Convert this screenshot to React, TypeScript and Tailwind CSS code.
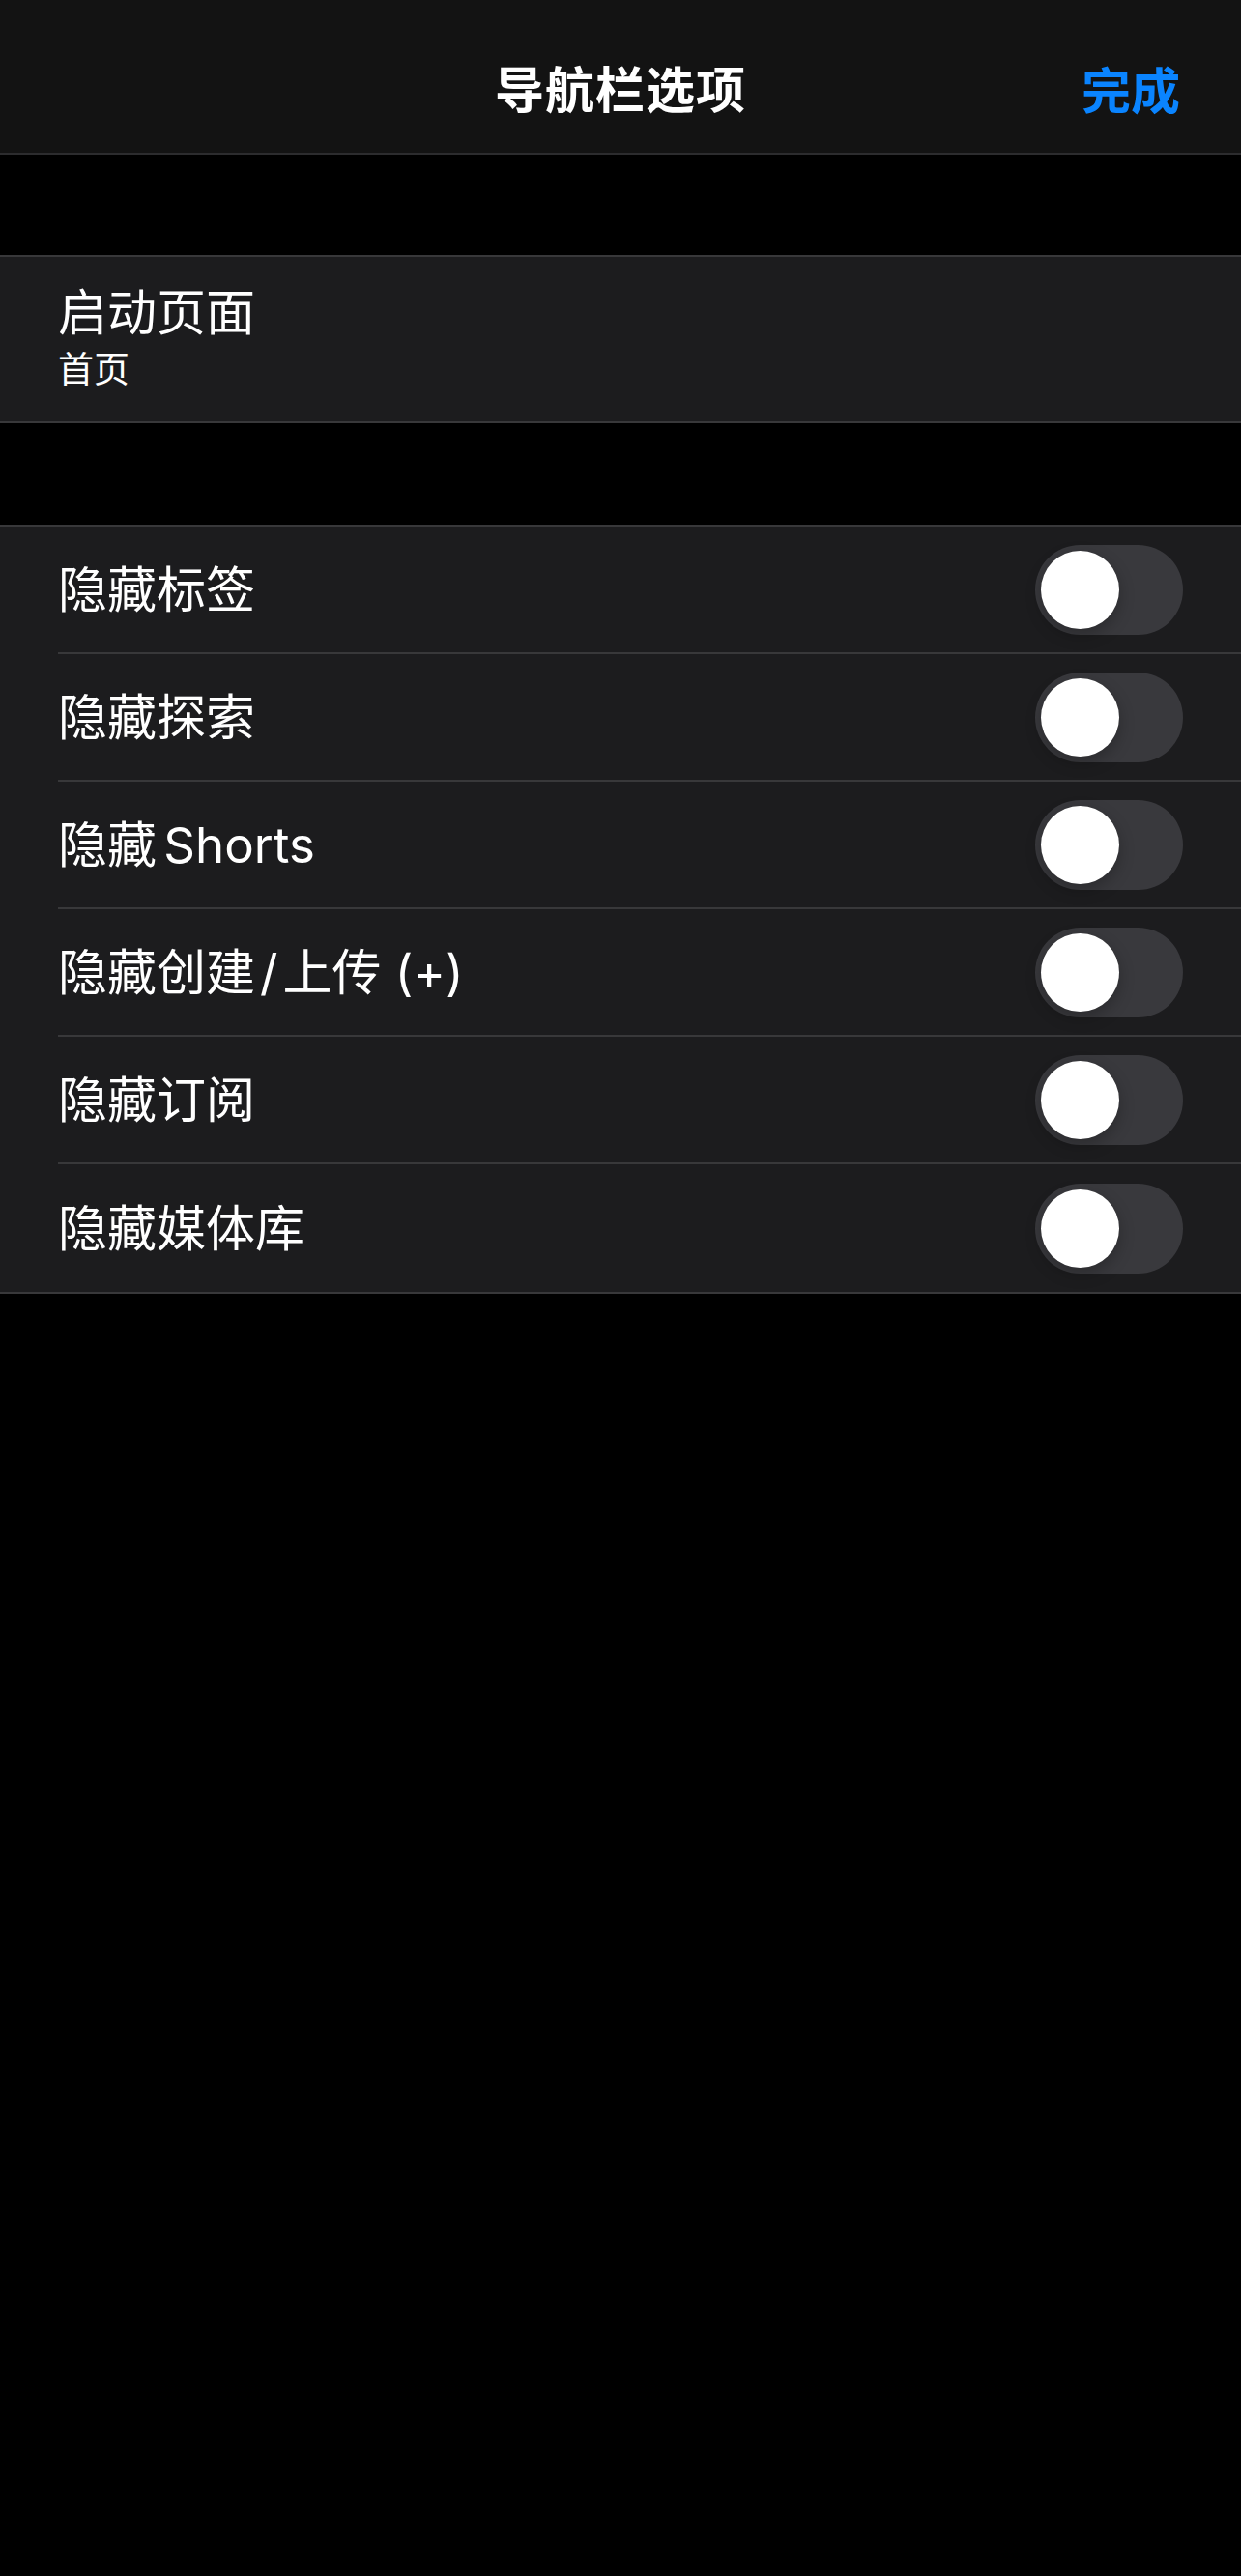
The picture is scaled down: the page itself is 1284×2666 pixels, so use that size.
import React, { useState } from 'react';

const font = "font-['Inter','Noto_Sans_CJK_SC',sans-serif]";

const items: { key: string; label: React.ReactNode }[] = [
  { key: 'tags', label: '隐藏标签' },
  { key: 'explore', label: '隐藏探索' },
  { key: 'shorts', label: <span className="[word-spacing:-7px]">隐藏 Shorts</span> },
  {
    key: 'create',
    label: (
      <>
        隐藏创建<span className="mx-[5px]">/</span>上传 (+)
      </>
    ),
  },
  { key: 'subs', label: '隐藏订阅' },
  { key: 'library', label: '隐藏媒体库' },
];

// iOS style switch, 51x31pt at 3x
const Toggle = ({ on, onChange }: { on: boolean; onChange: () => void }) => (
  <button
    onClick={onChange}
    className={`flex h-[93px] w-[153px] shrink-0 items-center rounded-full p-[6px] ${
      on ? 'justify-end bg-[#30d158]' : 'justify-start bg-[#39393d]'
    }`}
  >
    <span className="block h-[81px] w-[81px] rounded-full bg-white shadow-[0_6px_16px_rgba(0,0,0,0.25)]" />
  </button>
);

export default function App() {
  const [flags, setFlags] = useState<boolean[]>(items.map(() => false));

  const flip = (i: number) =>
    setFlags((prev) => prev.map((v, j) => (j === i ? !v : v)));

  return (
    <div className={`min-h-[2666px] w-full bg-black text-white ${font}`}>
      {/* nav bar */}
      <div className="relative flex h-[160px] items-center justify-center border-b-[2px] border-[#2c2c2e] bg-[#131313] pt-[28px]">
        <span className="text-[51px] font-semibold leading-none tracking-[1px]">导航栏选项</span>
        <button className="absolute right-[63px] top-[69px] text-[51px] font-semibold leading-none text-[#0a84ff]">
          完成
        </button>
      </div>

      {/* launch page */}
      <div className="mt-[104px] flex h-[174px] flex-col justify-center border-y-[2px] border-[#38383a] bg-[#1c1c1e] px-[60px] pb-[4px]">
        <span className="text-[51px] leading-[60px]">启动页面</span>
        <span className="mt-[7px] text-[37px] leading-[44px]">首页</span>
      </div>

      {/* toggles */}
      <div className="mt-[105px] border-y-[2px] border-[#38383a] bg-[#1c1c1e]">
        {items.map((item, i) => (
          <div key={item.key} className="pl-[60px]">
            <div
              className={`flex h-[132px] items-center justify-between pr-[60px] ${
                i < items.length - 1 ? 'border-b-[2px] border-[#38383a]' : ''
              }`}
            >
              <span className="text-[51px] leading-none">{item.label}</span>
              <Toggle on={flags[i]} onChange={() => flip(i)} />
            </div>
          </div>
        ))}
      </div>
    </div>
  );
}
